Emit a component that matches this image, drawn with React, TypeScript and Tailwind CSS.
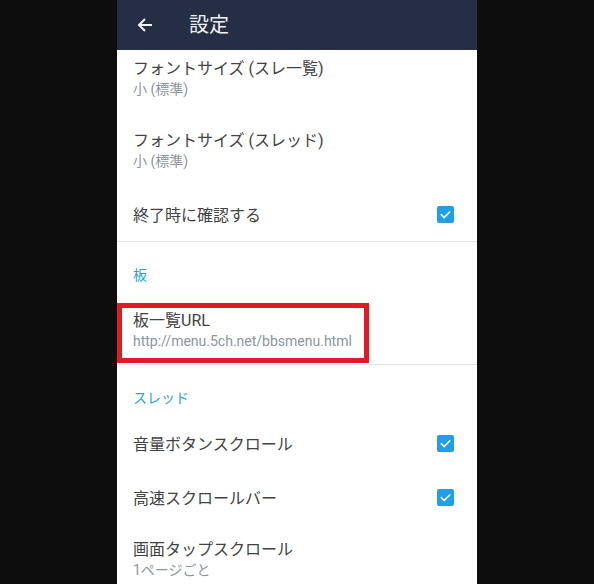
import React from "react";

const font = { fontFamily: 'Roboto, "Noto Sans CJK JP", sans-serif' };

function Check() {
  return (
    <div className="w-[17px] h-[17px] rounded-[2px] bg-[#1f9fe6] flex items-center justify-center">
      <svg width="13" height="13" viewBox="0 0 24 24" fill="none">
        <path d="M4.5 12.5l5 5L19.5 7.5" stroke="#fff" strokeWidth="3" strokeLinecap="square" />
      </svg>
    </div>
  );
}

function TwoLine({ title, sub, cls }: { title: string; sub: string; cls: string }) {
  return (
    <div className={`flex flex-col px-4 ${cls}`}>
      <div className="text-[16px] leading-[20px] text-[#424242]">{title}</div>
      <div className="text-[14px] leading-[20px] text-[#8a96a2]">{sub}</div>
    </div>
  );
}

function CheckRow({ title }: { title: string }) {
  return (
    <div className="flex items-center justify-between h-[54px] pl-4 pr-[23px]">
      <div className="text-[16px] leading-[20px] text-[#424242] pt-[3px]">{title}</div>
      <Check />
    </div>
  );
}

function Category({ title }: { title: string }) {
  return (
    <div className="h-[51px] px-4 pt-[23px] text-[14px] leading-[20px] text-[#2ba3dd]">{title}</div>
  );
}

export default function App() {
  return (
    <div className="w-[594px] h-[584px] bg-[#0d0d0d] flex justify-center overflow-hidden" style={font}>
      <div className="w-[360px] h-full bg-white flex flex-col">
        <div className="h-[50px] bg-[#262e45] flex items-center shrink-0">
          <svg className="ml-[20px]" width="16" height="16" viewBox="0 0 16 16" fill="none">
            <path d="M15 8H2M8 2L2 8l6 6" stroke="#f1f3f7" strokeWidth="2" />
          </svg>
          <div className="ml-[36px] text-[20px] leading-[24px] text-[#eef0f5]">設定</div>
        </div>
        <div className="flex flex-col">
          <TwoLine title="フォントサイズ (スレ一覧)" sub="小 (標準)" cls="h-[65px] pt-[9px]" />
          <TwoLine title="フォントサイズ (スレッド)" sub="小 (標準)" cls="h-[72px] pt-[16px]" />
          <CheckRow title="終了時に確認する" />
          <div className="h-px bg-[#e4e4e4]" />
          <Category title="板" />
          <div className="relative">
            <TwoLine title="板一覧URL" sub="http://menu.5ch.net/bbsmenu.html" cls="h-[71px] pt-[18px]" />
            <div className="absolute left-0 top-[10px] w-[252px] h-[60px] border-[5px] border-[#e01b23]" />
          </div>
          <div className="h-px bg-[#e4e4e4]" />
          <Category title="スレッド" />
          <CheckRow title="音量ボタンスクロール" />
          <CheckRow title="高速スクロールバー" />
          <TwoLine title="画面タップスクロール" sub="1ページごと" cls="h-[72px] pt-[16px]" />
        </div>
      </div>
    </div>
  );
}
